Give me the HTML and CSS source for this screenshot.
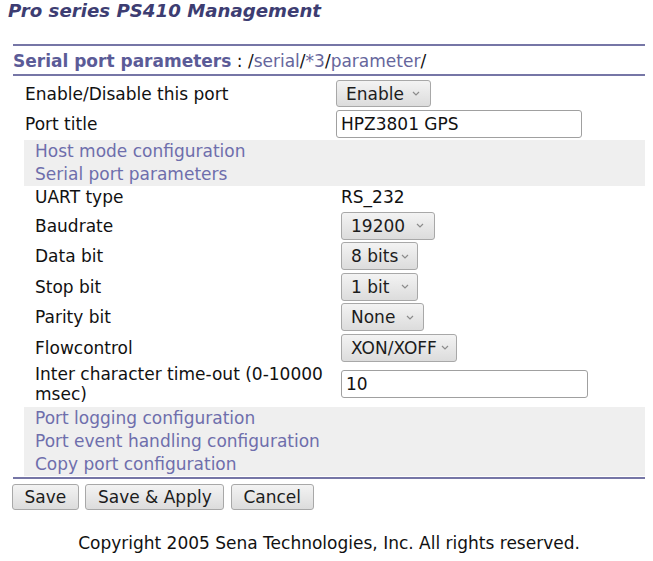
FILE: index.html
```html
<!DOCTYPE html>
<html>
<head>
<meta charset="utf-8">
<title>Pro series PS410 Management</title>
<link rel="stylesheet" href="styles.css">
</head>
<body>
<h1 class="title">Pro series PS410 Management</h1>
<div class="panel">
  <div class="rule"></div>
  <div class="header"><span class="hd">Serial port parameters</span> : /<a class="path">serial</a>/<a class="path">*3</a>/<a class="path">parameter</a>/</div>
  <div class="rule"></div>
  <div class="outer">
    <div class="lbl">Enable/Disable this port</div>
    <div class="val"><div class="sel w-enable"><span>Enable</span><svg class="chev" width="8" height="5" viewBox="0 0 8 5"><polyline points="1,1 4,4 7,1"/></svg></div></div>
    <div class="lbl">Port title</div>
    <div class="val"><input class="txt w-title" type="text" value="HPZ3801 GPS"></div>
  </div>
  <div class="nav">
    <a>Host mode configuration</a>
    <a>Serial port parameters</a>
  </div>
  <div class="inner">
    <div class="lbl plain">UART type</div>
    <div class="val plain">RS_232</div>
    <div class="lbl">Baudrate</div>
    <div class="val"><div class="sel w-baud"><span>19200</span><svg class="chev" width="8" height="5" viewBox="0 0 8 5"><polyline points="1,1 4,4 7,1"/></svg></div></div>
    <div class="lbl">Data bit</div>
    <div class="val"><div class="sel w-bits"><span>8 bits</span><svg class="chev" width="8" height="5" viewBox="0 0 8 5"><polyline points="1,1 4,4 7,1"/></svg></div></div>
    <div class="lbl">Stop bit</div>
    <div class="val"><div class="sel w-bits"><span>1 bit</span><svg class="chev" width="8" height="5" viewBox="0 0 8 5"><polyline points="1,1 4,4 7,1"/></svg></div></div>
    <div class="lbl">Parity bit</div>
    <div class="val"><div class="sel w-parity"><span>None</span><svg class="chev" width="8" height="5" viewBox="0 0 8 5"><polyline points="1,1 4,4 7,1"/></svg></div></div>
    <div class="lbl">Flowcontrol</div>
    <div class="val"><div class="sel w-flow"><span>XON/XOFF</span><svg class="chev" width="8" height="5" viewBox="0 0 8 5"><polyline points="1,1 4,4 7,1"/></svg></div></div>
    <div class="lbl">Inter character time-out (0-10000 msec)</div>
    <div class="val"><input class="txt w-timeout" type="text" value="10"></div>
  </div>
  <div class="nav nav3">
    <a>Port logging configuration</a>
    <a>Port event handling configuration</a>
    <a>Copy port configuration</a>
  </div>
  <div class="rule rule-bottom"></div>
  <div class="buttons">
    <button class="btn">Save</button>
    <button class="btn">Save &amp; Apply</button>
    <button class="btn">Cancel</button>
  </div>
</div>
<p class="copy">Copyright 2005 Sena Technologies, Inc. All rights reserved.</p>
</body>
</html>
```

FILE: styles.css
```css
html, body {
  background: #ffffff;
}
body {
  margin: 0 8px 8px 8px;
  font-family: "DejaVu Sans", sans-serif;
  font-size: 17px;
  color: #111111;
}
.title {
  margin: 0;
  font-size: 18.2px;
  font-weight: bold;
  font-style: italic;
  line-height: 21px;
  color: #3d3d72;
}
.panel {
  margin-left: 5px;
  margin-top: 23px;
}
.rule {
  height: 2px;
  background: #7676a6;
}
.header {
  padding: 5px 0 3px 0;
  line-height: 20px;
}
.hd {
  font-weight: bold;
  color: #5b5b97;
}
.path {
  color: #66669c;
}
.outer {
  display: grid;
  grid-template-columns: 311px 1fr;
  padding: 4px 0 0 12px;
  row-gap: 3px;
  align-items: center;
}
.lbl {
  line-height: 20px;
  padding-right: 6px;
}
.val {
  display: flex;
  align-items: center;
}
.sel {
  box-sizing: border-box;
  display: inline-flex;
  align-items: center;
  justify-content: space-between;
  height: 28px;
  padding: 0 9px 0 9px;
  border: 1px solid #a8a8a8;
  border-radius: 3px;
  background: linear-gradient(#f3f3f3, #dcdcdc);
  color: #1c1c1c;
  line-height: 20px;
}
.w-enable { width: 95px; height: 27px; padding-right: 10px; }
.w-baud { width: 94px; padding-right: 10px; }
.w-bits { width: 77px; padding-right: 8px; }
.w-parity { width: 83px; padding-right: 9px; }
.w-flow { width: 116px; padding-right: 7px; }
.chev {
  display: block;
  flex: none;
}
.chev polyline {
  fill: none;
  stroke: #8c8c8c;
  stroke-width: 1.2;
}
.txt {
  box-sizing: border-box;
  height: 28px;
  margin: 0;
  padding: 0 4px;
  border: 1px solid #a0a0a0;
  border-radius: 3px;
  background: #ffffff;
  font-family: "DejaVu Sans", sans-serif;
  font-size: 17px;
  color: #111111;
}
.w-title { width: 246px; }
.w-timeout { width: 247px; }
.nav {
  margin: 2px 0 0 11px;
  padding-left: 11px;
  background: #efefef;
  line-height: 23px;
}
.nav a {
  display: block;
  color: #6e6eac;
}
.nav3 {
  margin-top: 2.5px;
}
.inner {
  display: grid;
  grid-template-columns: 306px 1fr;
  padding-left: 22px;
  row-gap: 2.5px;
  align-items: center;
}
.inner .plain {
  line-height: 23px;
}
.rule-bottom {
  margin-top: 1px;
}
.buttons {
  display: flex;
  gap: 6.7px;
  margin: 5px 0 0 -1px;
}
.btn {
  box-sizing: border-box;
  height: 26px;
  margin: 0;
  padding: 0 11.5px;
  border: 1px solid #a8a8a8;
  border-radius: 3px;
  background: linear-gradient(#f3f3f3, #dcdcdc);
  font-family: "DejaVu Sans", sans-serif;
  font-size: 17px;
  color: #1c1c1c;
  line-height: 20px;
}
.copy {
  margin: 23px 0 0 0;
  padding-left: 5px;
  text-align: center;
  line-height: 20px;
}
```
